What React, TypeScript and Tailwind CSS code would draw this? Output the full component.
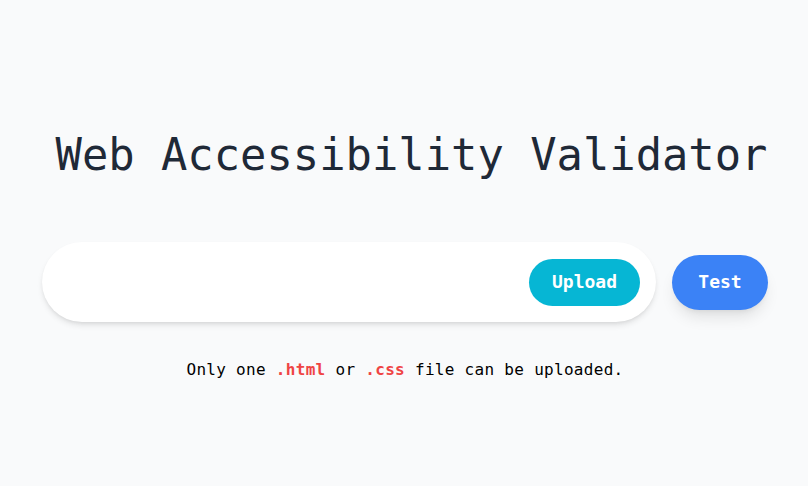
import { useState } from 'react';

// Web Accessibility Validator — 업로드 화면

const mono = "font-['DejaVu_Sans_Mono','Liberation_Mono',monospace]";

export default function App() {
  const [fileName] = useState<string>('');

  return (
    <div className={`min-h-[486px] w-full bg-[#f9fafb] ${mono}`}>
      <div className="flex flex-col items-center pt-[129px]">
        {/* 타이틀 */}
        <h1 className="pl-[15px] text-[43.8px] leading-[normal] font-normal text-[#1f2937]">
          Web Accessibility Validator
        </h1>

        {/* 업로드 + 테스트 */}
        <div className="mt-[62px] ml-[2px] flex items-center gap-4">
          <div className="flex h-[80px] w-[614px] items-center justify-between rounded-full bg-white pl-8 pr-4 shadow-md">
            <span className="text-base text-gray-500">{fileName}</span>
            <button
              type="button"
              className="h-[47px] w-[111px] rounded-full bg-[#06b6d4] text-lg font-bold text-white"
            >
              Upload
            </button>
          </div>
          <button
            type="button"
            className="h-[55px] w-[96px] rounded-full bg-[#3b82f6] text-lg font-bold text-white shadow-lg"
          >
            Test
          </button>
        </div>

        {/* 안내 문구 */}
        <p className="mt-[36px] ml-[2px] text-base leading-6 tracking-[0.3px] text-black">
          Only one <span className="font-bold text-[#ef4444]">.html</span> or{' '}
          <span className="font-bold text-[#ef4444]">.css</span> file can be uploaded.
        </p>
      </div>
    </div>
  );
}
